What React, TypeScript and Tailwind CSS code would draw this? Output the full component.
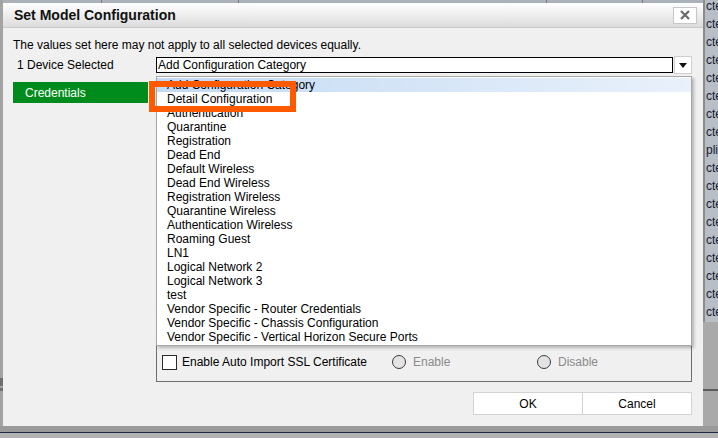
import React from "react";

const categories = [
  "Add Configuration Category",
  "Detail Configuration",
  "Authentication",
  "Quarantine",
  "Registration",
  "Dead End",
  "Default Wireless",
  "Dead End Wireless",
  "Registration Wireless",
  "Quarantine Wireless",
  "Authentication Wireless",
  "Roaming Guest",
  "LN1",
  "Logical Network 2",
  "Logical Network 3",
  "test",
  "Vendor Specific - Router Credentials",
  "Vendor Specific - Chassis Configuration",
  "Vendor Specific - Vertical Horizon Secure Ports",
];

// cut-off cells of the grid behind the dialog
const stripRows = Array.from({ length: 18 }, (_, i) => (i === 8 ? "plin" : "cte"));

function Radio({ label }: { label: string }) {
  return (
    <div className="flex items-center gap-[7px]">
      <span className="w-[14px] h-[14px] rounded-full border border-[#3c3c3c] bg-[#e3e3e3]" />
      <span className="text-[#8a8a8a]">{label}</span>
    </div>
  );
}

function CategoryDropdown() {
  return (
    <div className="absolute left-[153px] top-[73px] w-[536px] h-[270px] bg-white border border-[#a7a7a7] shadow-[2px_2px_3px_rgba(0,0,0,0.25)] pt-px">
      {categories.map((c, i) => (
        <div
          key={c}
          className={
            i === 0
              ? "h-[14px] leading-[14px] pl-[10px] bg-linear-to-r from-[#c3daf3] to-[#e9f1fb]"
              : "h-[14px] leading-[14px] pl-[10px]"
          }
        >
          {c}
        </div>
      ))}
    </div>
  );
}

function Dialog() {
  return (
    <div className="relative w-[700px] h-[423px] flex flex-col bg-[#f0f0f0]">
      <div className="h-[25px] shrink-0 flex items-center justify-between pl-[11px] pr-[6px] border-b border-[#c8c8c8] bg-linear-to-b from-white to-[#dcdcdc]">
        <span className="text-[14px] font-bold text-[#111]">Set Model Configuration</span>
        <button className="w-[24px] h-[17px] bg-white border border-[#c6c6c6] flex items-center justify-center">
          <svg width="10" height="10" viewBox="0 0 10 10">
            <path d="M1 1L9 9M9 1L1 9" stroke="#6a6a6a" strokeWidth="2.2" />
          </svg>
        </button>
      </div>

      <div className="flex-1 flex flex-col pl-[10px] pr-[11px] pt-[10px]">
        <p className="leading-[14px]">The values set here may not apply to all selected devices equally.</p>

        <div className="mt-[4px] h-[18px] flex items-center">
          <span className="w-[143px] pl-[4px]">1 Device Selected</span>
          <div className="w-[517px] h-[16px] border border-black bg-white pl-[1px] leading-[14px]">
            Add Configuration Category
          </div>
          <div className="ml-px w-[18px] h-[18px] bg-white border border-[#cfcfcf] flex items-center justify-center">
            <svg width="8" height="5" viewBox="0 0 8 5">
              <path d="M0 0H8L4 5Z" fill="#111" />
            </svg>
          </div>
        </div>

        <div className="mt-[8px] flex items-start gap-[8px]">
          <div className="w-[135px] h-[21px] bg-[#008c1c] text-white pl-[12px] flex items-center">Credentials</div>
          <div className="w-[536px] h-[300px] border border-[#6e6e6e] flex items-end pl-[5px] pb-[10px]">
            <div className="w-[230px] flex items-center gap-[5px]">
              <span className="w-[15px] h-[15px] border border-[#2b2b2b] bg-white" />
              <span>Enable Auto Import SSL Certificate</span>
            </div>
            <div className="w-[145px]">
              <Radio label="Enable" />
            </div>
            <Radio label="Disable" />
          </div>
        </div>

        <div className="mt-[10px] flex justify-end">
          <button className="w-[110px] h-[23px] bg-white border border-[#d3d3d3]">OK</button>
          <button className="w-[109px] h-[23px] bg-white border border-l-0 border-[#d3d3d3]">Cancel</button>
        </div>
      </div>

      <CategoryDropdown />

      {/* annotation around the picked entry */}
      <div className="absolute left-[146px] top-[78px] w-[147px] h-[31px] border-[6px] border-[#ff5a00]" />
    </div>
  );
}

export default function App() {
  return (
    <div className="w-[718px] h-[438px] overflow-hidden bg-[#a3a3a3] flex flex-col text-[12px] text-black font-['Liberation_Sans',Arial,sans-serif]">
      <div className="flex h-[426px] shrink-0">
        <div className="w-[3px] shrink-0 flex flex-col">
          <div className="h-[378px]" />
          <div className="h-[8px] bg-[#6f6f6f]" />
          <div className="h-[2px]" />
          <div className="h-[3px] bg-[#6f6f6f]" />
        </div>
        <div className="w-[700px] shrink-0 flex flex-col">
          <div className="h-[3px] bg-[#aab1b9] flex">
            <div className="w-[99px] border-r border-[#7c7c7c]" />
            <div className="w-[137px] border-r border-[#7c7c7c]" />
            <div className="w-[308px] border-r border-[#7c7c7c]" />
            <div className="w-[96px] border-r border-[#7c7c7c]" />
          </div>
          <Dialog />
        </div>
        <div className="flex-1 min-w-0 flex flex-col">
          <div className="h-[322px] bg-[#b7bec6] border-l-[2px] border-[#8b8b8b] pl-px overflow-hidden">
            <div className="-mt-[3px]">
              {stripRows.map((t, i) => (
                <div key={i} className="h-[18px] leading-[18px] text-[#151b33] whitespace-nowrap">
                  {t}
                </div>
              ))}
            </div>
          </div>
          <div className="h-[67px] bg-[#a9a9a9]" />
          <div className="h-[2px] bg-[#5e5e5e]" />
          <div className="flex-1 bg-[#a9a9a9]" />
        </div>
      </div>
      <div className="h-[6px] bg-[#9a9a9a]" />
      <div className="h-px bg-[#1f2a48]" />
      <div className="flex-1 bg-[#b2b2b2]" />
    </div>
  );
}
